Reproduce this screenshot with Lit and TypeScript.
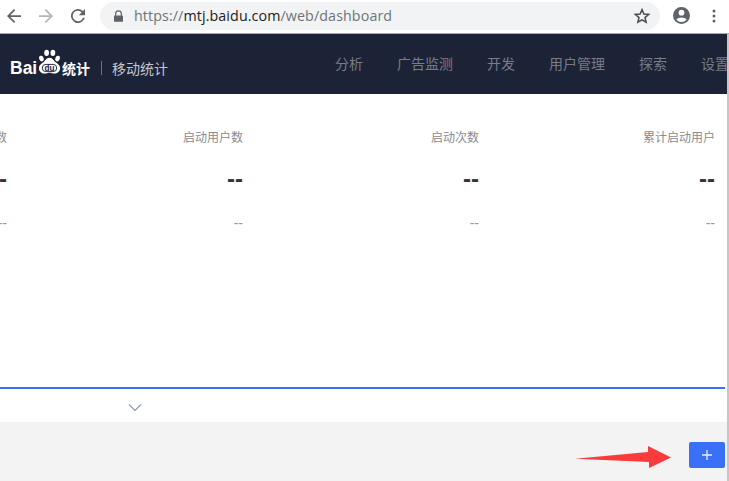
import { LitElement, html, css, svg } from "lit";
import { customElement } from "lit/decorators.js";

const NAV = ["分析", "广告监测", "开发", "用户管理", "探索", "设置"];
const STATS = ["活跃用户数", "启动用户数", "启动次数", "累计启动用户"];

@customElement("app-root")
export class AppRoot extends LitElement {
  static styles = css`
    :host {
      display: flex;
      flex-direction: column;
      width: 729px;
      height: 481px;
      overflow: hidden;
      background: #fff;
      font-family: "Noto Sans CJK SC", "Liberation Sans", sans-serif;
    }
    .chrome {
      flex: none;
      height: 31px;
      padding-bottom: 2px;
      display: flex;
      align-items: center;
      background: #fff;
      border-bottom: 1px solid #a9abae;
    }
    .ico { display: block; flex: none; }
    .back { margin-left: 7px; }
    .fwd { margin-left: 18px; }
    .reload { margin-left: 18px; }
    .omni {
      flex: none;
      width: 560px;
      height: 28px;
      margin-left: 15px;
      border-radius: 14px;
      background: #f1f3f4;
      display: flex;
      align-items: center;
      box-sizing: border-box;
      padding-left: 14px;
    }
    .url {
      margin-left: 11px;
      flex: 1;
      font: 14.27px "Open Sans", "Liberation Sans", sans-serif;
      letter-spacing: 0.1px;
      color: #6f7377;
      white-space: nowrap;
    }
    .url b { font-weight: 400; color: #202124; }
    .star { margin-right: 9px; }
    .avatar { margin-left: 13px; }
    .dots { margin-left: 22px; }
    .main {
      flex: 1;
      min-height: 0;
      display: flex;
      flex-direction: column;
      border-right: 2px solid #c6c6c6;
    }
    .nav {
      flex: none;
      height: 60px;
      background: #1c2337;
      display: flex;
      align-items: center;
      overflow: hidden;
    }
    .logo { margin: 8px 0 0 10px; flex: none; display: flex; align-items: center; }
    .bai {
      font: 700 17.5px "Liberation Sans", sans-serif;
      color: #fff;
      width: 27px;
    }
    .paw { margin-top: -12px; }
    .tongji-b {
      font-size: 14px;
      font-weight: 700;
      color: #fff;
      white-space: nowrap;
    }
    .sep { width: 1px; height: 14px; background: #6b7180; margin: 8px 10px 0 11px; flex: none; }
    .sub { font-size: 14px; color: #c4c6cc; white-space: nowrap; flex: none; margin-top: 8px; }
    .links {
      display: flex;
      gap: 34px;
      margin-left: 167px;
      margin-top: -3px;
      flex: none;
    }
    .links span { font-size: 14px; color: #777c89; white-space: nowrap; }
    .panel {
      flex: none;
      height: 293px;
      display: flex;
      justify-content: flex-end;
      padding: 33px 12px 0 0;
      box-sizing: border-box;
      overflow: hidden;
    }
    .stat {
      flex: none;
      width: 236px;
      text-align: right;
    }
    .lab { font-size: 12px; line-height: 20px; color: #8a8a8f; white-space: nowrap; }
    .val {
      margin-top: 16px;
      font: 700 24px/32px "Liberation Sans", sans-serif;
      color: #333;
    }
    .del {
      margin-top: 18px;
      font: 14px/20px "Liberation Sans", sans-serif;
      color: #999;
    }
    .tab {
      flex: none;
      height: 35px;
      border-top: 2px solid #3d6ff5;
      margin-right: 2px;
      display: flex;
      padding-left: 128px;
      padding-top: 14px;
      box-sizing: border-box;
    }
    .foot {
      flex: 1;
      min-height: 0;
      background: #f3f3f3;
      position: relative;
    }
    .add {
      position: absolute;
      left: 689px;
      top: 20px;
      width: 36px;
      height: 26px;
      border-radius: 2px;
      background: #3a70f8;
      display: flex;
      align-items: center;
      justify-content: center;
    }
    .arrow { position: absolute; left: 572px; top: 19px; }
  `;

  private paw() {
    return svg`
      <ellipse cx="4.6" cy="9.4" rx="2.3" ry="3" fill="#fff" transform="rotate(-20 4.600 9.400)"/>
      <ellipse cx="10" cy="3.500" rx="2.500" ry="3.300" fill="#fff"/>
      <ellipse cx="16.500" cy="3.500" rx="2.500" ry="3.300" fill="#fff"/>
      <ellipse cx="21.400" cy="9.400" rx="2.300" ry="3" fill="#fff" transform="rotate(20 21.400 9.400)"/>
      <path d="M13 8.500c3.400 0 4.600 3.600 7.200 5.400 2.300 1.600 3.800 3.300 3.800 5.600 0 3.400-2.700 5.500-5.900 5.500-2 0-3.500-.8-5.100-.8s-3.100.8-5.100.8C4.700 25 2 22.900 2 19.500c0-2.300 1.500-4 3.800-5.600 2.600-1.800 3.800-5.400 7.200-5.400z" fill="#fff"/>
      <rect x="5.500" y="15.500" width="15" height="7.500" rx="3.700" fill="#fff" stroke="#1c2337" stroke-width="1"/>
      <text x="13" y="22" text-anchor="middle" font-family="Liberation Sans" font-weight="700" font-size="8.500" fill="#1c2337">du</text>`;
  }

  render() {
    return html`
      <div class="chrome">
        <svg class="ico back" width="14" height="14" viewBox="0 0 16 16"><path d="M16 7H3.800l5.600-5.600L8 0 0 8l8 8 1.400-1.400L3.800 9H16z" fill="#5f6368"/></svg>
        <svg class="ico fwd" width="14" height="14" viewBox="0 0 16 16"><path d="M0 7h12.200L6.600 1.400 8 0l8 8-8 8-1.400-1.400L12.200 9H0z" fill="#b4b6b9"/></svg>
        <svg class="ico reload" width="14" height="14" viewBox="0 0 16 16"><path d="M13.650 2.350A8 8 0 1 0 15.750 10h-2.100a6 6 0 1 1-1.400-6.250L9 7h7V0z" fill="#5f6368"/></svg>
        <div class="omni">
          <svg class="ico" width="9" height="12" viewBox="1 0 10 13"><path d="M3.500 6V4a2.500 2.500 0 0 1 5 0v2h1.300V4a3.800 3.800 0 0 0-7.600 0v2z M2 6h8a1 1 0 0 1 1 1v5a1 1 0 0 1-1 1H2a1 1 0 0 1-1-1V7a1 1 0 0 1 1-1z" fill="#5f6368"/></svg>
          <div class="url">https://<b>mtj.baidu.com</b>/web/dashboard</div>
          <svg class="ico star" width="18" height="18" viewBox="0 0 24 24"><path d="M12 3.500l2.500 5.900 6.400.5-4.900 4.200 1.500 6.200L12 17l-5.500 3.300L8 14.100 3.100 9.900l6.400-.5z" fill="none" stroke="#4a4d50" stroke-width="2"/></svg>
        </div>
        <svg class="ico avatar" width="17" height="17" viewBox="0 0 18 18"><path fill-rule="evenodd" d="M9 0a9 9 0 1 0 0 18A9 9 0 0 0 9 0zm0 3a3 3 0 1 1 0 6 3 3 0 0 1 0-6zm0 13a7 7 0 0 1-5.500-2.700C4.500 11.700 7 11 9 11s4.500.7 5.500 2.300A7 7 0 0 1 9 16z" fill="#5f6368"/></svg>
        <svg class="ico dots" width="4" height="14" viewBox="0 0 4 14"><rect x="0.500" y="0.500" width="3" height="3" rx="1.500" fill="#5f6368"/><rect x="0.500" y="5.500" width="3" height="3" rx="1.500" fill="#5f6368"/><rect x="0.500" y="10.500" width="3" height="3" rx="1.500" fill="#5f6368"/></svg>
      </div>
      <div class="main">
        <div class="nav">
          <div class="logo">
            <span class="bai">Bai</span>
            <svg class="ico paw" width="25" height="26" viewBox="0 0 26 26">${this.paw()}</svg>
            <span class="tongji-b">统计</span>
          </div>
          <div class="sep"></div>
          <div class="sub">移动统计</div>
          <div class="links">${NAV.map((n) => html`<span>${n}</span>`)}</div>
        </div>
        <div class="panel">
          ${STATS.map(
            (s) => html`<div class="stat">
              <div class="lab">${s}</div>
              <div class="val">--</div>
              <div class="del">--</div>
            </div>`
          )}
        </div>
        <div class="tab">
          <svg class="ico" width="14" height="9" viewBox="0 0 14 9"><path d="M1 1.500l6 6 6-6" fill="none" stroke="#8f98a8" stroke-width="1.200"/></svg>
        </div>
        <div class="foot">
          <svg class="arrow" width="108" height="30" viewBox="0 0 108 30"><path d="M3 17.800L76 11l0-6 23 11.500L77 27l0-6z" fill="#f93b3b"/></svg>
          <div class="add">
            <svg class="ico" width="10" height="10" viewBox="0 0 10 10"><path d="M5 0v10M0 5h10" stroke="#e8f0ff" stroke-width="1.300"/></svg>
          </div>
        </div>
      </div>
    `;
  }
}
